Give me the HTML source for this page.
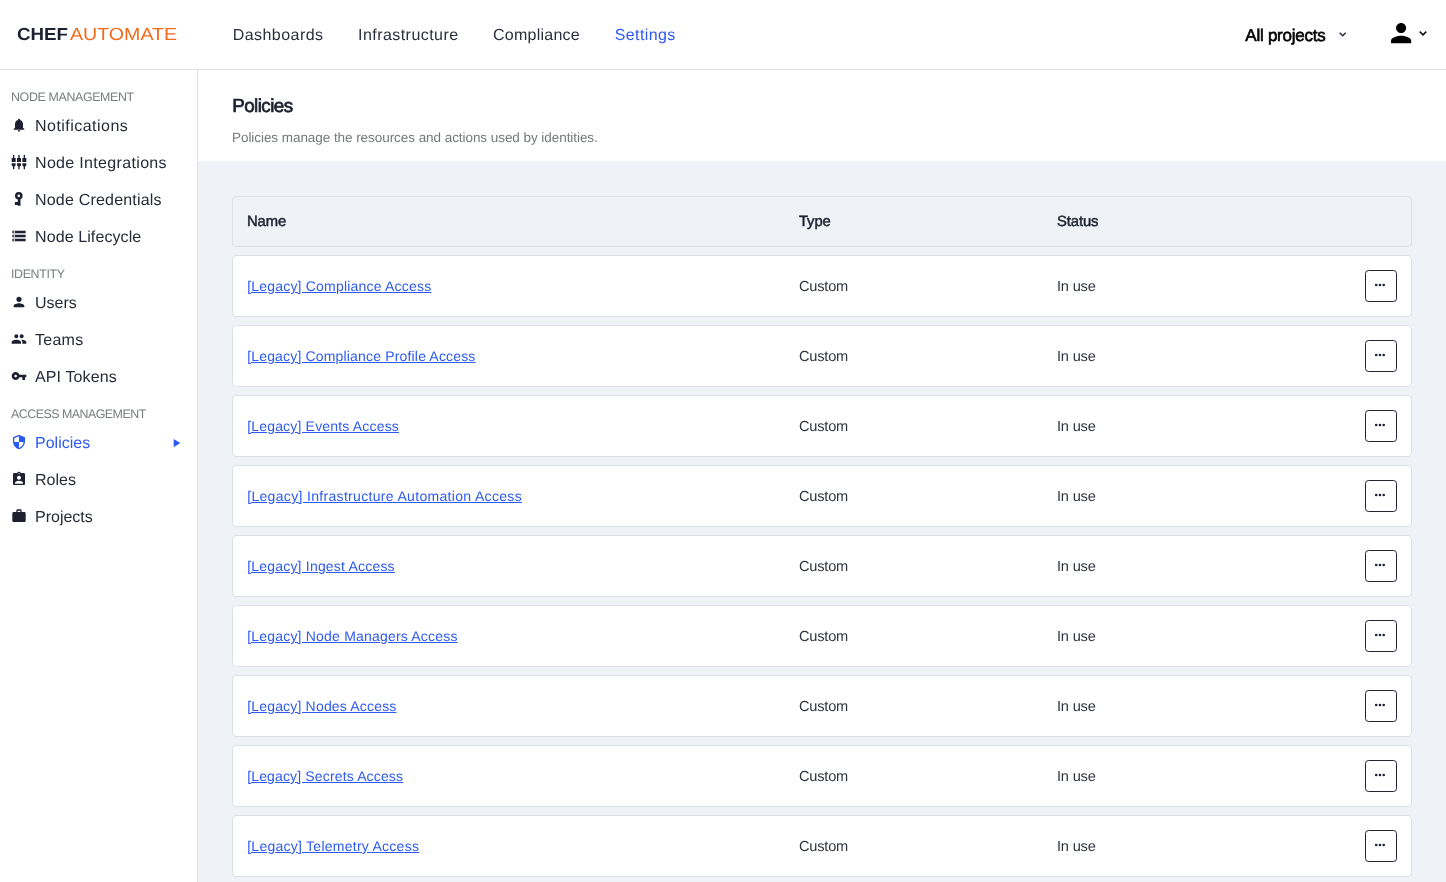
<!DOCTYPE html>
<html><head><meta charset="utf-8">
<style>
*{margin:0;padding:0;box-sizing:border-box}
html,body{width:1446px;height:882px;overflow:hidden;background:#fff;font-family:"Liberation Sans",sans-serif;color:#2a2f3d;text-rendering:geometricPrecision}
.a{position:absolute;white-space:nowrap;line-height:1}
#hdr{position:absolute;left:0;top:0;width:1446px;height:70px;border-bottom:1px solid #dce1e4;background:#fff}
#side{position:absolute;left:0;top:70px;width:198px;height:812px;border-right:1px solid #dce1e4;background:#fff}
#mainhead{position:absolute;left:198px;top:70px;width:1248px;height:91px;background:#fff}
#mainbody{position:absolute;left:198px;top:161px;width:1248px;height:721px;background:#eff3f7}
.nav{font-size:16px;color:#2b2f3c}
.lbl{font-size:12.4px;color:#767f7c;letter-spacing:-0.35px}
.itm{font-size:16px;color:#272b38}
.ico{position:absolute;fill:#1c2030}
.box{position:absolute;left:232px;width:1180px;border:1px solid #dce1e4;border-radius:4px;background:#fff}
.thd{background:#eff3f7}
.th{font-size:14.8px;color:#1f2331;-webkit-text-stroke:0.5px #1f2331;letter-spacing:-0.1px}
.lnk{font-size:14px;color:#2d5af0;text-decoration:underline;letter-spacing:0.2px}
.td{font-size:14.6px;color:#30343f;letter-spacing:-0.2px}
.btn{position:absolute;left:1365px;width:32px;height:32px;border:1px solid #202433;border-radius:3.5px;background:#fff}
.btn svg{fill:#1c2030}
</style></head><body>
<div id="root" style="position:absolute;left:0;top:0;width:1446px;height:882px;will-change:transform">
<div id="hdr"></div>
<div id="side"></div>
<div id="mainhead"></div>
<div id="mainbody"></div>

<!-- logo -->
<div class="a" style="left:17px;top:26.3px;font-size:17.5px;font-weight:bold;color:#1c2132;transform:scaleX(1.07);transform-origin:0 0">CHEF</div>
<div class="a" style="left:69.5px;top:26.3px;font-size:17.5px;color:#f26a1b;transform:scaleX(1.12);transform-origin:0 0">AUTOMATE</div>

<!-- nav -->
<div class="a nav" style="left:232.7px;top:27.5px;letter-spacing:0.45px">Dashboards</div>
<div class="a nav" style="left:358px;top:27.5px;letter-spacing:0.45px">Infrastructure</div>
<div class="a nav" style="left:493px;top:27.5px;letter-spacing:0.25px">Compliance</div>
<div class="a nav" style="left:614.7px;top:27.5px;color:#2d5af0;letter-spacing:0.4px">Settings</div>

<div class="a" style="left:1245.3px;top:27px;font-size:17px;color:#000;-webkit-text-stroke:0.6px #000;letter-spacing:-0.25px">All projects</div>
<svg class="ico" style="left:1330px;top:20px" width="30" height="30" viewBox="1330 20 30 30"><path d="M1339.7 32.8L1342.7 35.8L1345.7 32.8" fill="none" stroke="#262a3a" stroke-width="1.5"/></svg>
<svg class="ico" style="left:1385.7px;top:17.75px" width="30.24" height="30.24" viewBox="0 0 24 24"><path d="M12 12c2.21 0 4-1.79 4-4s-1.79-4-4-4-4 1.79-4 4 1.79 4 4 4zm0 2c-2.67 0-8 1.34-8 4v2h16v-2c0-2.66-5.33-4-8-4z" fill="#000"/></svg>
<svg class="ico" style="left:1410px;top:20px" width="30" height="30" viewBox="1410 20 30 30"><path d="M1419.7 31.6L1423 34.9L1426.3 31.6" fill="none" stroke="#111" stroke-width="1.5"/></svg>

<!-- sidebar -->
<div class="a lbl" style="left:11px;top:91px">NODE MANAGEMENT</div>
<div class="a itm" style="left:35px;top:119px;letter-spacing:0.47px">Notifications</div>
<div class="a itm" style="left:35px;top:156px;letter-spacing:0.33px">Node Integrations</div>
<div class="a itm" style="left:35px;top:193px;letter-spacing:0.2px">Node Credentials</div>
<div class="a itm" style="left:35px;top:230px;letter-spacing:0.1px">Node Lifecycle</div>
<div class="a lbl" style="left:11px;top:268px">IDENTITY</div>
<div class="a itm" style="left:35px;top:296px">Users</div>
<div class="a itm" style="left:35px;top:333px;letter-spacing:0.25px">Teams</div>
<div class="a itm" style="left:35px;top:370px;letter-spacing:0.12px">API Tokens</div>
<div class="a lbl" style="left:11px;top:408px;letter-spacing:-0.5px">ACCESS MANAGEMENT</div>
<div class="a itm" style="left:35px;top:436px;color:#2d5af0">Policies</div>
<div class="a itm" style="left:35px;top:473px">Roles</div>
<div class="a itm" style="left:35px;top:510px">Projects</div>


<!-- sidebar icons -->
<svg class="ico" style="left:11px;top:117px" width="16" height="16" viewBox="0 0 24 24"><path d="M12 22c1.1 0 2-.9 2-2h-4c0 1.1.89 2 2 2zm6-6v-5c0-3.07-1.64-5.64-4.5-6.32V4c0-.83-.67-1.5-1.5-1.5s-1.5.67-1.5 1.5v.68C7.63 5.36 6 7.92 6 11v5l-2 2v1h16v-1l-2-2z"/></svg>
<svg class="ico" style="left:11px;top:154px" width="16" height="16" viewBox="0 0 24 24"><path d="M5 2c0-.55-.45-1-1-1s-1 .45-1 1v4H1v6h6V6H5V2zm4 14c0 1.3.84 2.4 2 2.82V23h2v-4.18c1.16-.41 2-1.51 2-2.82v-2H9v2zm-8 0c0 1.3.84 2.4 2 2.82V23h2v-4.18C6.16 18.4 7 17.3 7 16v-2H1v2zM21 6V2c0-.55-.45-1-1-1s-1 .45-1 1v4h-2v6h6V6h-2zm-8-4c0-.55-.45-1-1-1s-1 .45-1 1v4H9v6h6V6h-2V2zm4 14c0 1.3.84 2.4 2 2.82V23h2v-4.18c1.16-.41 2-1.51 2-2.82v-2h-6v2z"/></svg>
<svg class="ico" style="left:0px;top:180px" width="40" height="40" viewBox="0 180 40 40"><path fill-rule="evenodd" d="M18.8 192a3.8 3.8 0 1 1 0 7.6a3.8 3.8 0 1 1 0-7.6zM18.8 194.5a1.35 1.35 0 1 0 0 2.7a1.35 1.35 0 1 0 0-2.7z"/><path d="M17.8 198.5h2.7v7.2h-2.7zM14.9 202.1h3.5v2.8h-3.5z"/></svg>
<svg class="ico" style="left:11px;top:228px" width="16" height="16" viewBox="0 0 24 24"><path d="M2 20h20v-4H2v4zm2-3h2v2H4v-2zM2 4v4h20V4H2zm4 3H4V5h2v2zm-4 7h20v-4H2v4zm2-3h2v2H4v-2z"/></svg>
<svg class="ico" style="left:11px;top:294px" width="16" height="16" viewBox="0 0 24 24"><path d="M12 12c2.21 0 4-1.79 4-4s-1.79-4-4-4-4 1.79-4 4 1.79 4 4 4zm0 2c-2.67 0-8 1.34-8 4v2h16v-2c0-2.66-5.33-4-8-4z"/></svg>
<svg class="ico" style="left:11px;top:331px" width="16" height="16" viewBox="0 0 24 24"><path d="M16 11c1.66 0 2.99-1.34 2.99-3S17.66 5 16 5c-1.66 0-3 1.34-3 3s1.34 3 3 3zm-8 0c1.66 0 2.99-1.34 2.99-3S9.66 5 8 5C6.34 5 5 6.34 5 8s1.34 3 3 3zm0 2c-2.33 0-7 1.17-7 3.5V19h14v-2.5c0-2.33-4.67-3.5-7-3.5zm8 0c-.29 0-.62.02-.97.05 1.16.84 1.97 1.97 1.97 3.45V19h6v-2.5c0-2.33-4.67-3.5-7-3.5z"/></svg>
<svg class="ico" style="left:11px;top:368px" width="16" height="16" viewBox="0 0 24 24"><path d="M12.65 10C11.83 7.67 9.61 6 7 6c-3.31 0-6 2.69-6 6s2.69 6 6 6c2.61 0 4.83-1.67 5.65-4H17v4h4v-4h2v-4H12.65zM7 14c-1.1 0-2-.9-2-2s.9-2 2-2 2 .9 2 2-.9 2-2 2z"/></svg>
<svg class="ico" style="left:11px;top:434px;fill:#2d5af0" width="16" height="16" viewBox="0 0 24 24"><path d="M12 1L3 5v6c0 5.55 3.84 10.74 9 12 5.16-1.26 9-6.45 9-12V5l-9-4zm0 10.99h7c-.53 4.12-3.28 7.79-7 8.94V12H5V6.3l7-3.11v8.8z"/></svg>
<svg class="ico" style="left:170px;top:436px;fill:#2d5af0" width="12" height="14" viewBox="0 0 12 14"><path d="M3.7 3L10.3 7.1L3.7 11.2z"/></svg>
<svg class="ico" style="left:11px;top:471px" width="16" height="16" viewBox="0 0 24 24"><path d="M19 3h-4.18C14.4 1.84 13.3 1 12 1c-1.3 0-2.4.84-2.82 2H5c-1.1 0-2 .9-2 2v14c0 1.1.9 2 2 2h14c1.1 0 2-.9 2-2V5c0-1.1-.9-2-2-2zm-7 0c.55 0 1 .45 1 1s-.45 1-1 1-1-.45-1-1 .45-1 1-1zm0 4c1.66 0 3 1.34 3 3s-1.34 3-3 3-3-1.34-3-3 1.34-3 3-3zm6 12H6v-1.4c0-2 4-3.1 6-3.1s6 1.1 6 3.1V19z"/></svg>
<svg class="ico" style="left:11px;top:508px" width="16" height="16" viewBox="0 0 24 24"><path d="M20 6h-4V4c0-1.11-.89-2-2-2h-4c-1.11 0-2 .89-2 2v2H4c-1.11 0-1.99.89-1.99 2L2 19c0 1.11.89 2 2 2h16c1.11 0 2-.89 2-2V8c0-1.11-.89-2-2-2zm-6 0h-4V4h4v2z"/></svg>

<!-- main header -->
<div class="a" style="left:232.2px;top:96.5px;font-size:18.8px;color:#1b1f2d;-webkit-text-stroke:0.7px #1b1f2d;letter-spacing:-0.55px">Policies</div>
<div class="a" style="left:232px;top:130.5px;font-size:13.5px;color:#737a78;letter-spacing:-0.057px">Policies manage the resources and actions used by identities.</div>

<!-- table -->
<div class="box thd" style="top:196px;height:51px"></div>
<div class="a th" style="left:247px;top:215px">Name</div>
<div class="a th" style="left:799px;top:215px">Type</div>
<div class="a th" style="left:1057px;top:215px">Status</div>
<div class="box" style="top:255px;height:62px"></div>
<div class="a lnk" style="left:247.2px;top:279px;letter-spacing:0.2px">[Legacy] Compliance Access</div>
<div class="a td" style="left:799px;top:280.00px">Custom</div>
<div class="a td" style="left:1057px;top:280.00px">In use</div>
<div class="btn" style="top:270px"><svg width="30" height="30" style="position:absolute;left:0;top:0"><circle cx="10.2" cy="14" r="1.3"/><circle cx="13.95" cy="14" r="1.3"/><circle cx="17.7" cy="14" r="1.3"/></svg></div>
<div class="box" style="top:325px;height:62px"></div>
<div class="a lnk" style="left:247.2px;top:349px;letter-spacing:0.17px">[Legacy] Compliance Profile Access</div>
<div class="a td" style="left:799px;top:350.00px">Custom</div>
<div class="a td" style="left:1057px;top:350.00px">In use</div>
<div class="btn" style="top:340px"><svg width="30" height="30" style="position:absolute;left:0;top:0"><circle cx="10.2" cy="14" r="1.3"/><circle cx="13.95" cy="14" r="1.3"/><circle cx="17.7" cy="14" r="1.3"/></svg></div>
<div class="box" style="top:395px;height:62px"></div>
<div class="a lnk" style="left:247.2px;top:419px;letter-spacing:0.18px">[Legacy] Events Access</div>
<div class="a td" style="left:799px;top:420.00px">Custom</div>
<div class="a td" style="left:1057px;top:420.00px">In use</div>
<div class="btn" style="top:410px"><svg width="30" height="30" style="position:absolute;left:0;top:0"><circle cx="10.2" cy="14" r="1.3"/><circle cx="13.95" cy="14" r="1.3"/><circle cx="17.7" cy="14" r="1.3"/></svg></div>
<div class="box" style="top:465px;height:62px"></div>
<div class="a lnk" style="left:247.2px;top:489px;letter-spacing:0.325px">[Legacy] Infrastructure Automation Access</div>
<div class="a td" style="left:799px;top:490.00px">Custom</div>
<div class="a td" style="left:1057px;top:490.00px">In use</div>
<div class="btn" style="top:480px"><svg width="30" height="30" style="position:absolute;left:0;top:0"><circle cx="10.2" cy="14" r="1.3"/><circle cx="13.95" cy="14" r="1.3"/><circle cx="17.7" cy="14" r="1.3"/></svg></div>
<div class="box" style="top:535px;height:62px"></div>
<div class="a lnk" style="left:247.2px;top:559px;letter-spacing:0.2px">[Legacy] Ingest Access</div>
<div class="a td" style="left:799px;top:560.00px">Custom</div>
<div class="a td" style="left:1057px;top:560.00px">In use</div>
<div class="btn" style="top:550px"><svg width="30" height="30" style="position:absolute;left:0;top:0"><circle cx="10.2" cy="14" r="1.3"/><circle cx="13.95" cy="14" r="1.3"/><circle cx="17.7" cy="14" r="1.3"/></svg></div>
<div class="box" style="top:605px;height:62px"></div>
<div class="a lnk" style="left:247.2px;top:629px;letter-spacing:0.2px">[Legacy] Node Managers Access</div>
<div class="a td" style="left:799px;top:630.00px">Custom</div>
<div class="a td" style="left:1057px;top:630.00px">In use</div>
<div class="btn" style="top:620px"><svg width="30" height="30" style="position:absolute;left:0;top:0"><circle cx="10.2" cy="14" r="1.3"/><circle cx="13.95" cy="14" r="1.3"/><circle cx="17.7" cy="14" r="1.3"/></svg></div>
<div class="box" style="top:675px;height:62px"></div>
<div class="a lnk" style="left:247.2px;top:699px;letter-spacing:0.18px">[Legacy] Nodes Access</div>
<div class="a td" style="left:799px;top:700.00px">Custom</div>
<div class="a td" style="left:1057px;top:700.00px">In use</div>
<div class="btn" style="top:690px"><svg width="30" height="30" style="position:absolute;left:0;top:0"><circle cx="10.2" cy="14" r="1.3"/><circle cx="13.95" cy="14" r="1.3"/><circle cx="17.7" cy="14" r="1.3"/></svg></div>
<div class="box" style="top:745px;height:62px"></div>
<div class="a lnk" style="left:247.2px;top:769px;letter-spacing:0.15px">[Legacy] Secrets Access</div>
<div class="a td" style="left:799px;top:770.00px">Custom</div>
<div class="a td" style="left:1057px;top:770.00px">In use</div>
<div class="btn" style="top:760px"><svg width="30" height="30" style="position:absolute;left:0;top:0"><circle cx="10.2" cy="14" r="1.3"/><circle cx="13.95" cy="14" r="1.3"/><circle cx="17.7" cy="14" r="1.3"/></svg></div>
<div class="box" style="top:815px;height:62px"></div>
<div class="a lnk" style="left:247.2px;top:839px;letter-spacing:0.26px">[Legacy] Telemetry Access</div>
<div class="a td" style="left:799px;top:840.00px">Custom</div>
<div class="a td" style="left:1057px;top:840.00px">In use</div>
<div class="btn" style="top:830px"><svg width="30" height="30" style="position:absolute;left:0;top:0"><circle cx="10.2" cy="14" r="1.3"/><circle cx="13.95" cy="14" r="1.3"/><circle cx="17.7" cy="14" r="1.3"/></svg></div>
</div>
</body></html>
